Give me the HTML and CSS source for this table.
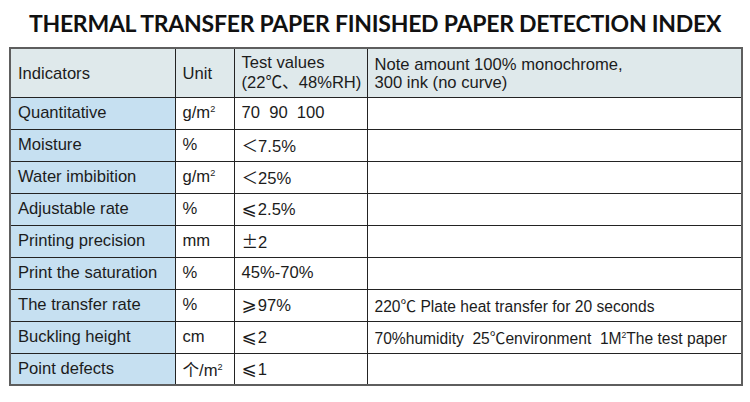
FILE: index.html
```html
<!DOCTYPE html>
<html>
<head>
<meta charset="utf-8">
<link rel="stylesheet" href="styles.css">
</head>
<body>
<h1 class="title">THERMAL TRANSFER PAPER FINISHED PAPER DETECTION INDEX</h1>
<table class="spec">
  <colgroup>
    <col class="c1"><col class="c2"><col class="c3"><col class="c4">
  </colgroup>
  <thead>
    <tr class="head">
      <th>Indicators</th>
      <th>Unit</th>
      <th class="two">Test values<br>(22<span class="cjk">℃、</span>48%RH)</th>
      <th class="two note">Note amount 100% monochrome,<br>300 ink (no curve)</th>
    </tr>
  </thead>
  <tbody>
    <tr><td class="label">Quantitative</td><td>g/m<span class="sup">2</span></td><td>70&nbsp;&nbsp;90&nbsp;&nbsp;100</td><td></td></tr>
    <tr><td class="label">Moisture</td><td>%</td><td><span class="cjk">＜</span>7.5%</td><td></td></tr>
    <tr><td class="label">Water imbibition</td><td>g/m<span class="sup">2</span></td><td><span class="cjk">＜</span>25%</td><td></td></tr>
    <tr><td class="label">Adjustable rate</td><td>%</td><td><span class="sym">⩽</span>2.5%</td><td></td></tr>
    <tr><td class="label">Printing precision</td><td>mm</td><td><span class="cjk">±</span>2</td><td></td></tr>
    <tr><td class="label">Print the saturation</td><td>%</td><td>45%-70%</td><td></td></tr>
    <tr><td class="label">The transfer rate</td><td>%</td><td><span class="sym">⩾</span>97%</td><td class="small">220<span class="cjk">℃</span> Plate heat transfer for 20 seconds</td></tr>
    <tr><td class="label">Buckling height</td><td>cm</td><td><span class="sym">⩽</span>2</td><td class="small">70%humidity&nbsp;&nbsp;25<span class="cjk">℃</span>environment&nbsp;&nbsp;1M<span class="sup">2</span>The test paper</td></tr>
    <tr><td class="label">Point defects</td><td><span class="cjk">个</span>/m<span class="sup">2</span></td><td><span class="sym">⩽</span>1</td><td></td></tr>
  </tbody>
</table>
</body>
</html>
```

FILE: styles.css
```css
html, body {
  margin: 0;
  padding: 0;
  background: #ffffff;
}
body {
  width: 750px;
  height: 402px;
  overflow: hidden;
  font-family: "Liberation Sans", Arial, "Noto Sans CJK SC", sans-serif;
  color: #1c1c1c;
}
.title {
  margin: 0;
  height: 47px;
  line-height: 46px;
  text-align: center;
  white-space: nowrap;
  font-family: "Lato", "Open Sans", sans-serif;
  font-weight: 700;
  font-size: 23px;
  letter-spacing: -0.25px;
  color: #111;
}
.spec {
  margin-left: 9px;
  width: 732px;
  border-collapse: collapse;
  table-layout: fixed;
  border: 2px solid #5e5e5e;
  font-size: 16.6px;
}
.c1 { width: 165px; }
.c2 { width: 59px; }
.c3 { width: 133px; }
.c4 { width: 375px; }
.spec th, .spec td {
  border: 1px solid #232323;
  padding: 0 0 0 7px;
  text-align: left;
  font-weight: normal;
  white-space: nowrap;
  vertical-align: middle;
}
.head {
  height: 49px;
}
.head th {
  background: #dfe9eb;
  line-height: 18px;
  padding-top: 2px;
}
.head th.two {
  padding-top: 0;
}
.head th.note {
  padding-top: 3px;
}
.spec tbody tr {
  height: 32px;
}
.spec tbody td {
  background: #ffffff;
}
.spec tbody td.label {
  background: #c6e0f1;
}
.spec td.small {
  font-size: 15.6px;
}
.cjk {
  font-family: "Noto Sans CJK SC", sans-serif;
  font-weight: 400;
}
.sym {
  font-family: "DejaVu Sans", sans-serif;
  font-size: 1.1em;
  margin-right: 1px;
}
.sup {
  font-size: 0.55em;
  position: relative;
  top: -0.65em;
}
```
